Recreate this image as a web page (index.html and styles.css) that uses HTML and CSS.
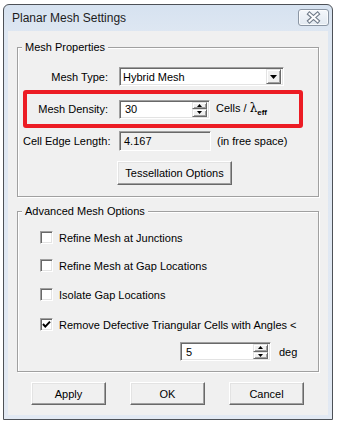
FILE: index.html
```html
<!DOCTYPE html>
<html lang="en">
<head>
    <meta charset="UTF-8">
    <title>Planar Mesh Settings</title>
    <link rel="stylesheet" href="styles.css">
</head>
<body>
<div class="window">
    <div class="titlebar">
        <span class="title">Planar Mesh Settings</span>
        <button class="close" aria-label="Close">
            <svg width="29" height="15" viewBox="0 0 29 15">
                <path d="M10.5 4 L18.5 11 M18.5 4 L10.5 11" stroke="#6f7a88" stroke-width="4.2" stroke-linecap="square"/>
                <path d="M10.5 4 L18.5 11 M18.5 4 L10.5 11" stroke="#fdfdfe" stroke-width="2" stroke-linecap="square"/>
            </svg>
        </button>
    </div>

    <div class="client">
        <!-- Mesh properties -->
        <fieldset class="group group-props">
            <legend>Mesh Properties</legend>
            <div class="group-body props-body">
                <div class="row row-type">
                    <label class="label">Mesh Type:</label>
                    <div class="field combo">
                        <span class="field-text">Hybrid Mesh</span>
                        <span class="combo-btn">
                            <svg width="7" height="4" viewBox="0 0 7 4"><path d="M0 0 H7 L3.5 4 Z" fill="#000"/></svg>
                        </span>
                    </div>
                </div>

                <div class="row highlight">
                    <label class="label">Mesh Density:</label>
                    <div class="field spin">
                        <span class="field-text">30</span>
                        <span class="spin-btns">
                            <span class="spin-btn"><svg width="5" height="3" viewBox="0 0 5 3"><path d="M2.5 0 L5 3 H0 Z" fill="#000"/></svg></span>
                            <span class="spin-btn"><svg width="5" height="3" viewBox="0 0 5 3"><path d="M0 0 H5 L2.5 3 Z" fill="#000"/></svg></span>
                        </span>
                    </div>
                    <span class="unit">Cells / <span class="lambda">λ</span><sub>eff</sub></span>
                </div>

                <div class="row row-edge">
                    <label class="label">Cell Edge Length:</label>
                    <div class="field readonly"><span class="field-text">4.167</span></div>
                    <span class="unit">(in free space)</span>
                </div>

                <div class="row row-tess">
                    <button class="btn btn-tess">Tessellation Options</button>
                </div>
            </div>
        </fieldset>

        <!-- Advanced options -->
        <fieldset class="group group-adv">
            <legend>Advanced Mesh Options</legend>
            <div class="group-body adv-body">
                <div class="check"><span class="box"></span><span>Refine Mesh at Junctions</span></div>
                <div class="check"><span class="box"></span><span>Refine Mesh at Gap Locations</span></div>
                <div class="check"><span class="box"></span><span>Isolate Gap Locations</span></div>
                <div class="check">
                    <span class="box">
                        <svg width="11" height="11" viewBox="0 0 11 11"><path d="M2 5 L4.3 7.6 L9 2.6" fill="none" stroke="#000" stroke-width="2"/></svg>
                    </span>
                    <span>Remove Defective Triangular Cells with Angles &lt;</span>
                </div>

                <div class="angle-row">
                    <div class="field spin spin-angle">
                        <span class="field-text">5</span>
                        <span class="spin-btns">
                            <span class="spin-btn"><svg width="5" height="3" viewBox="0 0 5 3"><path d="M2.5 0 L5 3 H0 Z" fill="#000"/></svg></span>
                            <span class="spin-btn"><svg width="5" height="3" viewBox="0 0 5 3"><path d="M0 0 H5 L2.5 3 Z" fill="#000"/></svg></span>
                        </span>
                    </div>
                    <span class="unit">deg</span>
                </div>
            </div>
        </fieldset>

        <div class="actions">
            <button class="btn">Apply</button>
            <button class="btn">OK</button>
            <button class="btn">Cancel</button>
        </div>
    </div>
</div>
</body>
</html>
```

FILE: styles.css
```css
body {
    margin: 0;
    background-color: #ffffff;
    font-family: "Liberation Sans", Arial, sans-serif;
    font-size: 11px;
    color: #000;
}

/* Window frame */
.window {
    margin: 4px 0 0 3px;
    width: 330px;
    height: 416px;
    box-sizing: border-box;
    border: 1px solid #4d5157;
    border-radius: 6px 6px 0 0;
    background: linear-gradient(#d6e2f0, #dee7f2 28px, #e2e9f3);
    display: flex;
    flex-direction: column;
}

.titlebar {
    height: 26px;
    flex: none;
    display: flex;
    justify-content: space-between;
    align-items: flex-start;
    padding: 0 3px 0 8px;
}

.title {
    margin-top: 6px;
    font-size: 12px;
    line-height: 14px;
    color: #1c1c1c;
}

.close {
    margin-top: 4px;
    width: 31px;
    height: 17px;
    padding: 0;
    border: 1px solid #8b96a4;
    border-radius: 3px;
    background: linear-gradient(#f4f7fb, #e2e9f1);
    box-shadow: inset 0 0 0 1px rgba(255, 255, 255, 0.7);
    display: flex;
    align-items: center;
    justify-content: center;
}

.client {
    flex: 1;
    margin: 0 4px 4px;
    padding: 0 9px;
    background-color: #f0f0f0;
    display: flex;
    flex-direction: column;
}

/* Group boxes */
.group {
    margin: 0;
    padding: 0;
    min-width: 0;
    border: 1px solid #a0a0a0;
    box-shadow: inset 1px 1px 0 #ffffff, 1px 1px 0 #ffffff;
}

.group legend {
    margin-left: 4px;
    padding: 0 3px;
    font-size: 11px;
    line-height: 14px;
    background-color: #f0f0f0;
}

.group-props {
    margin-top: 9px;
}

.group-adv {
    margin-top: 7px;
}

.props-body {
    padding: 13px 0 11px;
}

.adv-body {
    padding: 0 0 10px;
}

/* Rows */
.row {
    display: flex;
    align-items: center;
    padding-left: 5px;
}

.label {
    width: 85px;
    margin-right: 11px;
    text-align: right;
    white-space: nowrap;
}

.row-type {
    height: 19px;
}

.highlight {
    margin: 4px 0 0 5px;
    padding: 0;
    width: 280px;
    height: 38px;
    box-sizing: border-box;
    border: 4px solid #ec1c24;
    border-radius: 3px;
}

.highlight .label {
    width: 81px;
}

.row-edge {
    margin-top: 3px;
    height: 20px;
}

.row-tess {
    margin-top: 10px;
    padding-left: 99px;
}

/* Sunken fields */
.field {
    height: 19px;
    box-sizing: border-box;
    border: 1px solid;
    border-color: #a0a0a0 #ffffff #ffffff #a0a0a0;
    box-shadow: inset 1px 1px 0 #696969, inset -1px -1px 0 #e3e3e3;
    background-color: #ffffff;
    display: flex;
    align-items: center;
    padding: 0 2px 0 4px;
}

.field-text {
    flex: 1;
}

.combo {
    width: 165px;
    padding-left: 3px;
}

.combo-btn {
    width: 15px;
    height: 15px;
    box-sizing: border-box;
    border: 1px solid;
    border-color: #e3e3e3 #696969 #696969 #e3e3e3;
    box-shadow: inset 1px 1px 0 #ffffff, inset -1px -1px 0 #a0a0a0;
    background-color: #f0f0f0;
    display: flex;
    align-items: center;
    justify-content: center;
}

.spin {
    width: 91px;
    padding-left: 5px;
}

.spin-btns {
    width: 15px;
    height: 15px;
    display: flex;
    flex-direction: column;
}

.spin-btn {
    flex: 1;
    box-sizing: border-box;
    border: 1px solid;
    border-color: #e3e3e3 #696969 #696969 #e3e3e3;
    box-shadow: inset 1px 1px 0 #ffffff, inset -1px -1px 0 #a0a0a0;
    background-color: #f0f0f0;
    display: flex;
    align-items: center;
    justify-content: center;
}

.readonly {
    width: 92px;
    height: 20px;
    background-color: #f0f0f0;
    box-shadow: inset 1px 1px 0 #696969;
    border-color: #a0a0a0 #ffffff #ffffff #a0a0a0;
}

.unit {
    margin-left: 6px;
    white-space: nowrap;
}

.lambda {
    font-family: "DejaVu Serif", serif;
    font-size: 12px;
}

.unit sub {
    font-size: 8px;
    font-weight: bold;
    vertical-align: -3px;
}

/* Checkboxes */
.check {
    display: flex;
    align-items: center;
    height: 13px;
    margin-top: 15px;
    padding-left: 22px;
}

.check:first-child {
    margin-top: 13px;
}

.check:nth-child(3) {
    margin-top: 16px;
}

.check:nth-child(4) {
    margin-top: 17px;
}

.box {
    width: 13px;
    height: 13px;
    box-sizing: border-box;
    margin-right: 6px;
    border: 1px solid;
    border-color: #a0a0a0 #ffffff #ffffff #a0a0a0;
    box-shadow: inset 1px 1px 0 #696969, inset -1px -1px 0 #e3e3e3;
    background-color: #ffffff;
    display: flex;
    align-items: center;
    justify-content: center;
}

.angle-row {
    display: flex;
    align-items: center;
    margin-top: 11px;
    padding-left: 162px;
}

.angle-row .unit {
    margin-left: 8px;
}

/* Buttons */
.btn {
    font-family: "Liberation Sans", Arial, sans-serif;
    font-size: 11px;
    color: #000;
    width: 75px;
    height: 23px;
    padding: 0;
    border: 1px solid;
    border-color: #ffffff #696969 #696969 #ffffff;
    box-shadow: inset -1px -1px 0 #a0a0a0, inset 1px 1px 0 #e3e3e3;
    background-color: #f0f0f0;
}

.btn-tess {
    width: 115px;
    height: 24px;
}

.actions {
    display: flex;
    gap: 24px;
    margin-top: 10px;
    padding-left: 14px;
}
```
